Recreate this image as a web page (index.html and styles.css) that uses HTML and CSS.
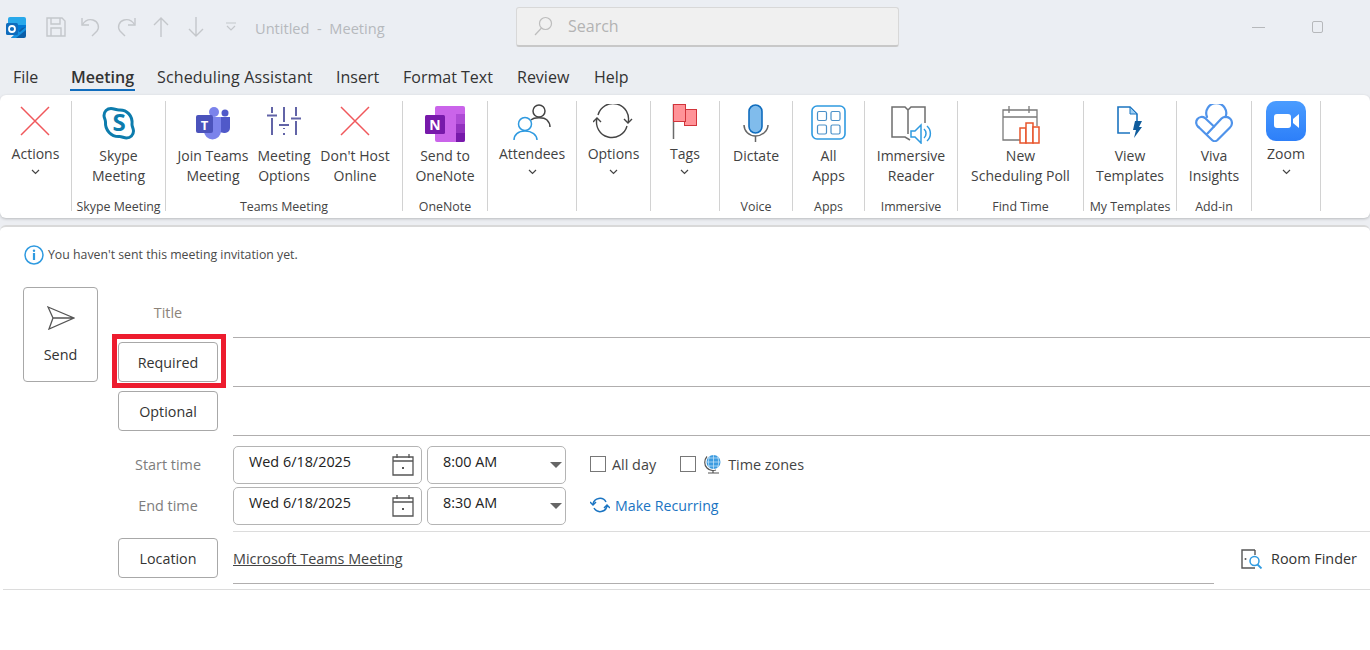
FILE: index.html
```html
<!DOCTYPE html>
<html lang="en">
<head>
<meta charset="utf-8">
<title>Untitled - Meeting</title>
<link rel="stylesheet" href="styles.css">
</head>
<body>
<header class="titlebar">
  <svg class="logo" width="20" height="21" viewBox="0 0 20 21"><path fill="#28a8ea" d="M4 0h14a2 2 0 0 1 2 2v7H2V2a2 2 0 0 1 2-2z"/><path fill="#0078d4" d="M2 8h18v3l-4 5H6z"/><path fill="#0a5ea8" d="M20 10v9a2 2 0 0 1-2 2H5l8-7 3-3z"/><path fill="#1490df" d="M5 21l7-7 2 1 6-5v3l-10 8z"/><rect x="0" y="6" width="12" height="12" rx="1.5" fill="#0f6cbd"/><circle cx="6" cy="12" r="3" fill="none" stroke="#fff" stroke-width="1.8"/></svg>
  <div class="quick">
    <span class="qcell"><svg width="20" height="20" viewBox="0 0 20 20" fill="none" stroke="#c4c7cb" stroke-width="1.4"><path d="M1 1h15l3 3v15H1z"/><path d="M5 1v6h9V1M5 19v-8h10v8"/></svg></span>
    <span class="qcell"><svg width="20" height="20" viewBox="0 0 20 20" fill="none" stroke="#c4c7cb" stroke-width="1.4"><path d="M1 1v7h7"/><path d="M1.500 7.500C4 3.500 8 2 12 3c5 1.500 7 7 4 11l-5 5"/></svg></span>
    <span class="qcell"><svg width="20" height="20" viewBox="0 0 20 20" fill="none" stroke="#c4c7cb" stroke-width="1.4"><path d="M19 1v7h-7"/><path d="M18.500 7.500C16 3.500 12 2 8 3c-5 1.500-7 7-4 11l5 5"/></svg></span>
    <span class="qcell"><svg width="16" height="20" viewBox="0 0 16 20" fill="none" stroke="#c4c7cb" stroke-width="1.4"><path d="M8 20V1M1 8l7-7 7 7"/></svg></span>
    <span class="qcell"><svg width="16" height="20" viewBox="0 0 16 20" fill="none" stroke="#c4c7cb" stroke-width="1.4"><path d="M8 0v19M1 12l7 7 7-7"/></svg></span>
    <span class="qcell"><svg width="12" height="10" viewBox="0 0 12 10" fill="none" stroke="#c4c7cb" stroke-width="1.2"><path d="M1 1h10M2 4l4 4 4-4"/></svg></span>
  </div>
  <div class="doc-title">Untitled&nbsp; -&nbsp; Meeting</div>
  <div class="search">
    <svg width="20" height="20" viewBox="0 0 20 20" fill="none" stroke="#bdbdbd" stroke-width="1.2"><circle cx="12.500" cy="7.500" r="6"/><path d="M8.500 12L2 19"/></svg>
    <span>Search</span>
  </div>
  <div class="winbtns">
    <span class="win-min"></span>
    <span class="win-max"></span>
  </div>
</header>

<nav class="tabs">
  <span>File</span>
  <span class="tab-on">Meeting</span>
  <span class="tab-wide">Scheduling Assistant</span>
  <span>Insert</span>
  <span>Format Text</span>
  <span>Review</span>
  <span>Help</span>
</nav>

<section class="ribbon">
  <div class="group">
    <div class="btns">
      <div class="rb menu">
        <div class="ic"><svg width="30" height="30" viewBox="0 0 30 30" stroke="#f0585c" stroke-width="1.5"><path d="M1 1l28 28M29 1L1 29"/></svg></div>
        <span>Actions</span><svg class="chev" width="9" height="6" viewBox="0 0 9 6" fill="none" stroke="#444" stroke-width="1.2"><path d="M1 1l3.500 3.500L8 1"/></svg>
      </div>
    </div>
  </div>
  <div class="group">
    <div class="btns">
      <div class="rb">
        <div class="ic"><svg width="34" height="34" viewBox="0 0 34 34"><path fill="none" stroke="#0d7cad" stroke-width="3" d="M9 2.500c3 0 5 1.500 8 1.500 8-.5 14 6 13 14.500 0 2 1.500 4 1.500 6.500 0 4-3 7-7 7-2.500 0-4.500-1.500-7-1.500C9 31 3 24 3.500 16 3.500 13.500 2 12 2 9.500 2 5.500 5 2.500 9 2.500z"/><text x="17" y="25" text-anchor="middle" class="svg-s">S</text></svg></div>
        <span>Skype<br>Meeting</span>
      </div>
    </div>
    <div class="glabel">Skype Meeting</div>
  </div>
  <div class="group">
    <div class="btns">
      <div class="rb w71">
        <div class="ic"><svg width="36" height="34" viewBox="0 0 36 34"><circle cx="30" cy="7" r="3.500" fill="#5059c9"/><path fill="#5059c9" d="M24 11h11v11a5 5 0 0 1-5 5h-1l-5-1z"/><circle cx="19" cy="6" r="5" fill="#7b83eb"/><path fill="#7b83eb" d="M9 11h17v14a8.500 8.500 0 0 1-17 0z"/><rect x="1" y="9" width="17" height="18" rx="2" fill="#4b53bc"/><text x="9.500" y="23.500" text-anchor="middle" class="svg-t">T</text></svg></div>
        <span>Join Teams<br>Meeting</span>
      </div>
      <div class="rb w71">
        <div class="ic"><svg width="36" height="30" viewBox="0 0 36 30" fill="none" stroke="#6264a7" stroke-width="2"><path d="M6 1v6M6 12v17M1 9.500h10M18 1v15M18 22v1M18 27v2M13 19h10M30 1v9M30 15v14M25 12.500h10"/></svg></div>
        <span>Meeting<br>Options</span>
      </div>
      <div class="rb w71">
        <div class="ic"><svg width="30" height="30" viewBox="0 0 30 30" stroke="#f0585c" stroke-width="1.500"><path d="M1 1l28 28M29 1L1 29"/></svg></div>
        <span>Don't Host<br>Online</span>
      </div>
    </div>
    <div class="glabel">Teams Meeting</div>
  </div>
  <div class="group">
    <div class="btns">
      <div class="rb">
        <div class="ic"><svg width="40" height="36" viewBox="0 0 40 36"><rect x="10" y="0" width="30" height="36" rx="2" fill="#ca64ea"/><rect x="31" y="8" width="9" height="10" fill="#ae4bd5"/><rect x="31" y="18" width="9" height="9" fill="#9332bf"/><path d="M31 27h9v7a2 2 0 0 1-2 2h-7z" fill="#7719aa"/><rect x="0" y="9" width="20" height="19" rx="1.500" fill="#7719aa"/><text x="10" y="24" text-anchor="middle" class="svg-n">N</text></svg></div>
        <span>Send to<br>OneNote</span>
      </div>
    </div>
    <div class="glabel">OneNote</div>
  </div>
  <div class="group">
    <div class="btns">
      <div class="rb menu">
        <div class="ic"><svg class="up2" width="38" height="37" viewBox="0 0 38 37" fill="none" stroke-width="1.500"><circle cx="26" cy="7" r="6" stroke="#444"/><path d="M18 16c3-3 13-3 16 0 2 2 3 4 3 7" stroke="#444"/><circle cx="12" cy="20" r="6.500" stroke="#2f9ae0" fill="#fff"/><path d="M1 36c0-5 4-9 11-9s12 4 12 9" stroke="#2f9ae0"/></svg></div>
        <span>Attendees</span><svg class="chev" width="9" height="6" viewBox="0 0 9 6" fill="none" stroke="#444" stroke-width="1.2"><path d="M1 1l3.500 3.500L8 1"/></svg>
      </div>
    </div>
  </div>
  <div class="group">
    <div class="btns">
      <div class="rb menu">
        <div class="ic"><svg class="up2" width="40" height="36" viewBox="0 0 40 36" fill="none" stroke="#444" stroke-width="1.400"><path d="M4 14A15.500 15.500 0 0 0 34 22"/><path d="M35 19A15.500 15.500 0 0 0 5 11"/><path d="M0 18l4-4 4 4M31 15l4 4 4-4"/></svg></div>
        <span>Options</span><svg class="chev" width="9" height="6" viewBox="0 0 9 6" fill="none" stroke="#444" stroke-width="1.2"><path d="M1 1l3.500 3.500L8 1"/></svg>
      </div>
    </div>
  </div>
  <div class="group">
    <div class="btns">
      <div class="rb menu">
        <div class="ic"><svg class="up2" width="26" height="36" viewBox="0 0 26 36"><path d="M1.500 0v35" stroke="#6a6a6a" stroke-width="1.500"/><rect x="12.500" y="5.500" width="12" height="16" fill="#ff9398" stroke="#d1343b"/><rect x="1.500" y="0.500" width="12" height="17" fill="#ff9398" stroke="#d1343b"/></svg></div>
        <span>Tags</span><svg class="chev" width="9" height="6" viewBox="0 0 9 6" fill="none" stroke="#444" stroke-width="1.2"><path d="M1 1l3.500 3.500L8 1"/></svg>
      </div>
    </div>
  </div>
  <div class="group">
    <div class="btns">
      <div class="rb">
        <div class="ic"><svg class="up2" width="26" height="38" viewBox="0 0 26 38" fill="none"><rect x="6" y="1" width="13" height="28" rx="6.500" fill="#80bcec" stroke="#0f6cbd" stroke-width="1.600"/><path d="M1 21c0 6 5 11 11.500 11S25 27 25 21" stroke="#666" stroke-width="1.500"/><path d="M12.500 32v6" stroke="#666" stroke-width="1.500"/></svg></div>
        <span>Dictate</span>
      </div>
    </div>
    <div class="glabel">Voice</div>
  </div>
  <div class="group">
    <div class="btns">
      <div class="rb">
        <div class="ic"><svg class="up1" width="36" height="36" viewBox="0 0 36 36" fill="none" stroke="#2f9ae0"><rect x="1" y="1" width="33" height="33" rx="5" stroke-width="1.600"/><g stroke="#4a90c8" stroke-width="1.200"><rect x="6.500" y="6.500" width="9" height="9" rx="1.500"/><rect x="20" y="6.500" width="9" height="9" rx="1.500"/><rect x="6.500" y="20" width="9" height="9" rx="1.500"/><rect x="20" y="20" width="9" height="9" rx="1.500"/></g></svg></div>
        <span>All<br>Apps</span>
      </div>
    </div>
    <div class="glabel">Apps</div>
  </div>
  <div class="group">
    <div class="btns">
      <div class="rb">
        <div class="ic"><svg width="42" height="38" viewBox="0 0 42 38" fill="none" stroke="#6e6e6e" stroke-width="1.500"><path d="M18 4L15 1H2v30h13l5 3"/><path d="M18 4l3-3h14v16M18 4v24"/><path fill="#fff" stroke="#2f9ae0" d="M21 25h4l6-6v18l-6-6h-4z"/><path stroke="#2f9ae0" d="M34 23a6 6 0 0 1 0 9M37 20a10 10 0 0 1 0 15"/></svg></div>
        <span>Immersive<br>Reader</span>
      </div>
    </div>
    <div class="glabel">Immersive</div>
  </div>
  <div class="group">
    <div class="btns">
      <div class="rb">
        <div class="ic"><svg width="40" height="38" viewBox="0 0 40 38" fill="none"><g stroke="#7a7a7a" stroke-width="1.300"><path d="M24 34H3V4h34v16M3 11h34M9 0v7M29 0v7"/></g><g fill="#fff" stroke="#e8552d" stroke-width="1.500"><rect x="20" y="22" width="6" height="15"/><rect x="26" y="17" width="7" height="20"/><rect x="33" y="21" width="6" height="16"/></g></svg></div>
        <span>New<br>Scheduling Poll</span>
      </div>
    </div>
    <div class="glabel">Find Time</div>
  </div>
  <div class="group">
    <div class="btns">
      <div class="rb">
        <div class="ic"><svg width="26" height="34" viewBox="0 0 26 34" fill="none"><path stroke="#1b74c0" stroke-width="1.600" d="M13 27H1V1h12l7 7v8"/><path fill="#9fd0f5" stroke="#1b74c0" stroke-width="1" d="M13 1v7h7z"/><path fill="#0f5c9c" d="M18 15h7l-3 6h3l-8 11 2-8h-3z"/></svg></div>
        <span>View<br>Templates</span>
      </div>
    </div>
    <div class="glabel">My Templates</div>
  </div>
  <div class="group">
    <div class="btns">
      <div class="rb">
        <div class="ic"><svg class="up2" width="38" height="38" viewBox="0 0 38 38" fill="none" stroke="#4f93ea" stroke-width="2.200" stroke-linecap="round"><path d="M3.500 23L17 36a4 4 0 0 0 5.500 0L35 23.500a6 6 0 0 0-8.500-9L12.500 29.500"/><path d="M3.500 23a5.500 5.500 0 0 1 6.500-9L19 22.500"/><path d="M12 13A10 10 0 1 1 30.500 13"/></svg></div>
        <span>Viva<br>Insights</span>
      </div>
    </div>
    <div class="glabel">Add-in</div>
  </div>
  <div class="group">
    <div class="btns">
      <div class="rb menu">
        <div class="ic zoom-ic"><svg width="40" height="40" viewBox="0 0 40 40"><defs><linearGradient id="zg" x1="0" y1="0" x2="0" y2="1"><stop offset="0" stop-color="#4a9cff"/><stop offset="1" stop-color="#2d7ff9"/></linearGradient></defs><rect width="40" height="40" rx="10" fill="url(#zg)"/><rect x="8" y="13" width="17" height="14" rx="3" fill="#fff"/><path fill="#fff" d="M27 18l6-5v14l-6-5z"/></svg></div>
        <span>Zoom</span><svg class="chev" width="9" height="6" viewBox="0 0 9 6" fill="none" stroke="#444" stroke-width="1.2"><path d="M1 1l3.500 3.500L8 1"/></svg>
      </div>
    </div>
  </div>
</section>

<main class="content">
  <div class="notice">
    <svg width="20" height="20" viewBox="0 0 20 20"><circle cx="10" cy="10" r="9" fill="none" stroke="#2f9ae0" stroke-width="1.500"/><circle cx="10" cy="5.800" r="1.200" fill="#2f9ae0"/><rect x="8.900" y="8" width="2.200" height="7" fill="#2f9ae0"/></svg>
    <span>You haven't sent this meeting invitation yet.</span>
  </div>
  <div class="form">
    <button class="send" type="button">
      <svg width="28" height="24" viewBox="0 0 28 24" fill="none" stroke="#555" stroke-width="1.300"><path d="M1 1l26 11L2 23l4-11zM6 12h21"/></svg>
      <span>Send</span>
    </button>
    <div class="fields">
      <div class="row row-title">
        <div class="lbl lbl-title">Title</div>
        <div class="field"></div>
      </div>
      <div class="row">
        <button class="pill marked" type="button">Required</button>
        <div class="field"></div>
      </div>
      <div class="row">
        <button class="pill" type="button">Optional</button>
        <div class="field"></div>
      </div>
      <div class="times">
        <div class="trow">
          <div class="lbl">Start time</div>
          <div class="box date">Wed 6/18/2025
            <svg width="22" height="22" viewBox="0 0 22 22" fill="none" stroke="#555" stroke-width="1.300"><path d="M1 3h20v18H1zM1 7h20M5 0v4M17 0v4"/><rect x="10" y="13" width="2" height="2" fill="#555" stroke="none"/></svg>
          </div>
          <div class="box time">8:00 AM<i class="caret"></i></div>
          <div class="opts">
            <label class="chk"><i class="cb"></i>All day</label>
            <label class="chk"><i class="cb"></i>
              <svg class="globe" width="18" height="20" viewBox="0 0 18 20" fill="none"><circle cx="9.500" cy="8" r="7" fill="#3d9ce0"/><path d="M2.500 8h14M9.500 1v14M4 4h11M4 12h11M5.500 2.500c-1.500 3-1.500 8 0 11M13.500 2.500c1.500 3 1.500 8 0 11" stroke="#cfe8f9" stroke-width=".7"/><path d="M3 2.500C0 6 0 11 3 14c2 2 6 3 9 2M9 16v3M4 19h11" stroke="#555" stroke-width="1.200"/></svg>
              Time zones</label>
          </div>
        </div>
        <div class="trow">
          <div class="lbl">End time</div>
          <div class="box date">Wed 6/18/2025
            <svg width="22" height="22" viewBox="0 0 22 22" fill="none" stroke="#555" stroke-width="1.300"><path d="M1 3h20v18H1zM1 7h20M5 0v4M17 0v4"/><rect x="10" y="13" width="2" height="2" fill="#555" stroke="none"/></svg>
          </div>
          <div class="box time">8:30 AM<i class="caret"></i></div>
          <div class="opts">
            <a class="recur"><svg width="20" height="18" viewBox="0 0 20 18" fill="none" stroke="#1a74c2" stroke-width="1.500"><path d="M3 8a7 7 0 0 1 13-2M17 10a7 7 0 0 1-13 2"/><path d="M0 6l3 3 3-3M14 12l3-3 3 3"/></svg>Make Recurring</a>
          </div>
        </div>
      </div>
      <div class="row row-loc">
        <button class="pill" type="button">Location</button>
        <div class="loc-wrap">
          <div class="field loc-field"><a class="teams-link">Microsoft Teams Meeting</a></div>
          <div class="finder">
            <svg width="22" height="20" viewBox="0 0 22 20" fill="none"><path d="M14 1H1v18h13" stroke="#555" stroke-width="1.400"/><path d="M14 1v5" stroke="#555" stroke-width="1.400"/><circle cx="4.500" cy="10" r="1" fill="#555"/><circle cx="13.500" cy="12" r="4.500" fill="#fff" stroke="#2f9ae0" stroke-width="1.500"/><path d="M16.500 15.500l4 4" stroke="#2f9ae0" stroke-width="1.800"/></svg>
            <span>Room Finder</span>
          </div>
        </div>
      </div>
    </div>
  </div>
  <div class="endrule"></div>
</main>
</body>
</html>
```

FILE: styles.css
```css
*, *::after { box-sizing: border-box; }

html, body {
  margin: 0;
  height: 650px;
  overflow: hidden;
}

body {
  width: 1370px;
  background: #eceef2;
  color: #3b3b3b;
  font-family: "Open Sans", "Noto Sans", sans-serif;
  font-size: 14.400px;
}

i { font-style: normal; display: block; }

/* Title bar */
.titlebar {
  height: 60px;
  display: flex;
  align-items: center;
  padding-left: 6px;
  padding-bottom: 6px;
  background: #ebeef3;
}

.logo { flex: none; margin-right: 12px; }

.quick { display: flex; align-items: center; }

.qcell {
  width: 35px;
  display: flex;
  justify-content: center;
}

.doc-title {
  width: 261px;
  margin-left: 7px;
  padding-top: 2px;
  font-size: 14.600px;
  color: #b6b9bd;
}

.search {
  width: 383px;
  height: 40px;
  display: flex;
  align-items: center;
  gap: 15px;
  padding-left: 16px;
  padding-bottom: 2px;
  background: #f0f0f0;
  border: 1px solid #d8d8d8;
  border-bottom: 2px solid #c8c8c8;
  border-radius: 3px;
  color: #b3b3b3;
  font-size: 16px;
}

.winbtns {
  margin-left: auto;
  width: 118px;
  display: flex;
  align-items: center;
}

.win-min {
  width: 13px;
  height: 1px;
  background: #b6b8bb;
  margin-right: 47px;
}

.win-max {
  width: 11px;
  height: 12px;
  border: 1px solid #b6b8bb;
  border-radius: 2px;
}

/* Tabs */
.tabs {
  height: 35px;
  padding-left: 13px;
  display: grid;
  grid-template-columns: 58px 86px 179px 67px 114px 77px 1fr;
  align-items: start;
  background: #ebeef2;
  font-size: 16px;
  line-height: 34px;
  color: #333;
}

.tabs span { white-space: nowrap; }

.tab-wide { letter-spacing: .15px; }

.tab-on {
  font-weight: 600;
  position: relative;
}

.tab-on::after {
  content: "";
  position: absolute;
  left: -1px;
  top: 29px;
  width: 65px;
  height: 2px;
  background: #0f6cbd;
}

/* Ribbon */
.ribbon {
  height: 123px;
  padding-top: 6px;
  display: grid;
  grid-template-columns: 72px 94px 237px 85px 89px 74px 69px 73px 72px 93px 126px 93px 75px 69px;
  align-items: start;
  background: #fff;
  border-radius: 6px;
  box-shadow: 0 1px 3px rgba(0, 0, 0, .22);
  font-size: 14px;
  line-height: 20px;
  color: #424242;
}

.group {
  height: 110px;
  display: flex;
  flex-direction: column;
  border-right: 1px solid #d2d2d2;
}

.btns {
  display: flex;
  justify-content: center;
}

.rb {
  display: flex;
  flex-direction: column;
  align-items: center;
  text-align: center;
  white-space: nowrap;
}

.w71 { width: 71px; }

.ic {
  height: 45px;
  display: flex;
  align-items: flex-start;
  justify-content: center;
  padding-top: 5px;
}

.menu .ic { height: 43px; }

.up2 { margin-top: -2px; }
.up1 { margin-top: -1px; }

.chev { margin-top: 5px; }

.zoom-ic { padding-top: 0; }

.glabel {
  margin-top: auto;
  margin-bottom: -4px;
  text-align: center;
  font-size: 12.400px;
  line-height: 16px;
  white-space: nowrap;
  color: #444;
}

.svg-s { font: 700 24px "Open Sans", sans-serif; fill: #0d7cad; }
.svg-t { font: 700 13px "Open Sans", sans-serif; fill: #fff; }
.svg-n { font: 700 14px "Open Sans", sans-serif; fill: #fff; }

/* Content */
.content {
  height: 425px;
  margin-top: 7px;
  background: #fff;
  border-top: 2px solid #d9d9d9;
  border-radius: 6px 6px 0 0;
}

.notice {
  display: flex;
  align-items: center;
  gap: 4px;
  height: 20px;
  margin: 18px 0 22px 24px;
  font-size: 12.300px;
  color: #4a4a4a;
}

.notice span { padding-bottom: 2px; }

.form {
  display: flex;
  align-items: flex-start;
  padding-left: 23px;
}

.send {
  flex: none;
  width: 75px;
  height: 95px;
  margin-right: 20px;
  padding: 18px 0 0;
  display: flex;
  flex-direction: column;
  align-items: center;
  gap: 15px;
  background: #fff;
  border: 1px solid #a8a8a8;
  border-radius: 4px;
  font: 14.400px "Open Sans", sans-serif;
  color: #333;
}

.fields { flex: 1; }

.row {
  height: 49px;
  display: grid;
  grid-template-columns: 100px 1fr;
  column-gap: 15px;
  align-items: start;
}

.row-title { height: 51px; }

.field {
  height: 100%;
  border-bottom: 1px solid #b0aeae;
}

.lbl {
  text-align: center;
  color: #7d7d7d;
  line-height: 38px;
}

.lbl-title { padding-top: 7px; color: #8c8379; }

.pill {
  height: 40px;
  margin-top: 4px;
  padding: 0;
  background: #fff;
  border: 1px solid #a8a8a8;
  border-radius: 4px;
  font: 14.300px "Open Sans", sans-serif;
  color: #333;
}

.marked { position: relative; }

.marked::after {
  content: "";
  position: absolute;
  left: -7px;
  top: -9px;
  width: 114px;
  height: 54px;
  border: 5px solid #ed1c2e;
  pointer-events: none;
}

.times {
  padding-top: 10px;
  padding-bottom: 9px;
  display: flex;
  flex-direction: column;
  gap: 5px;
  position: relative;
}

.times::after {
  content: "";
  position: absolute;
  left: 115px;
  right: 0;
  bottom: 0;
  height: 1px;
  background: #dcdcdc;
}

.trow {
  height: 36px;
  display: grid;
  grid-template-columns: 100px 189px 139px 1fr;
  align-items: stretch;
}

.box {
  display: flex;
  align-items: center;
  justify-content: space-between;
  border: 1px solid #b4b4b4;
  border-radius: 5px;
  padding-bottom: 5px;
  color: #222;
  line-height: 1;
}

.date {
  margin-left: 15px;
  width: 189px;
  padding-left: 15px;
  padding-right: 7px;
}

.date svg { margin-top: 5px; }

.time {
  width: 139px;
  margin-left: 20px;
  padding-left: 15px;
  padding-right: 3px;
}

.caret {
  width: 0;
  height: 0;
  margin-top: 5px;
  border-left: 6px solid transparent;
  border-right: 6px solid transparent;
  border-top: 6px solid #666;
}

.opts {
  display: flex;
  align-items: center;
  gap: 24px;
  margin-left: 44px;
  padding-bottom: 2px;
  white-space: nowrap;
  color: #444;
}

.chk {
  display: flex;
  align-items: center;
  gap: 6px;
}

.globe { margin-left: 2px; }

.cb {
  width: 16px;
  height: 16px;
  border: 1px solid #777;
}

.recur {
  display: flex;
  align-items: center;
  gap: 5px;
  font-size: 14.200px;
  color: #1a74c2;
}

.row-loc { height: 52px; }

.row-loc .pill { margin-top: 6px; }

.loc-wrap {
  display: flex;
  height: 100%;
}

.loc-field {
  flex: none;
  width: 981px;
  padding-top: 17px;
  line-height: 20px;
}

.teams-link {
  text-decoration: underline;
  color: #444;
}

.finder {
  display: flex;
  align-items: flex-start;
  gap: 8px;
  padding: 17px 0 0 27px;
  line-height: 20px;
  white-space: nowrap;
  color: #333;
}

.endrule {
  margin: 5px 0 0 3px;
  border-top: 1px solid #dcdcdc;
}
```
